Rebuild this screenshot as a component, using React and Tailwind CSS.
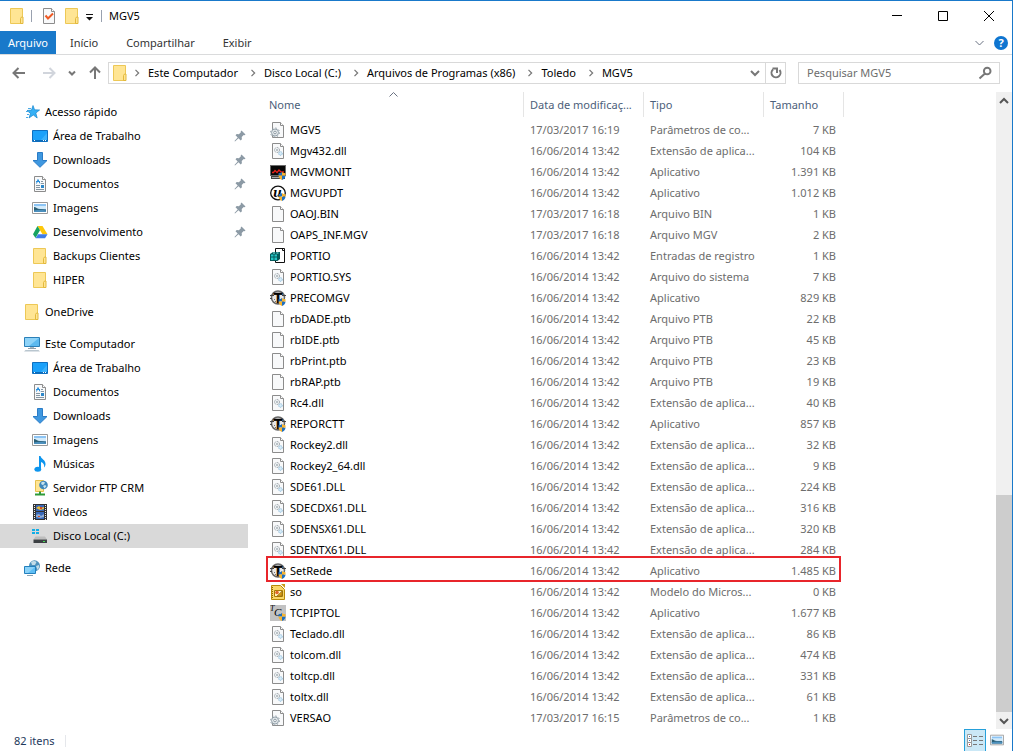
import { useState } from "react";

const DLL_TYPE = "Extensão de aplica...";
const INI_TYPE = "Parâmetros de co...";
const OLD = "16/06/2014 13:42";

const files = [
  { name: "MGV5", date: "17/03/2017 16:19", type: INI_TYPE, size: "7 KB", icon: "ini" },
  { name: "Mgv432.dll", date: OLD, type: DLL_TYPE, size: "104 KB", icon: "dll" },
  { name: "MGVMONIT", date: OLD, type: "Aplicativo", size: "1.391 KB", icon: "monitor" },
  { name: "MGVUPDT", date: OLD, type: "Aplicativo", size: "1.012 KB", icon: "update" },
  { name: "OAOJ.BIN", date: "17/03/2017 16:18", type: "Arquivo BIN", size: "1 KB", icon: "file" },
  { name: "OAPS_INF.MGV", date: "17/03/2017 16:18", type: "Arquivo MGV", size: "2 KB", icon: "file" },
  { name: "PORTIO", date: OLD, type: "Entradas de registro", size: "1 KB", icon: "reg" },
  { name: "PORTIO.SYS", date: OLD, type: "Arquivo do sistema", size: "7 KB", icon: "dll" },
  { name: "PRECOMGV", date: OLD, type: "Aplicativo", size: "829 KB", icon: "toledo" },
  { name: "rbDADE.ptb", date: OLD, type: "Arquivo PTB", size: "22 KB", icon: "file" },
  { name: "rbIDE.ptb", date: OLD, type: "Arquivo PTB", size: "45 KB", icon: "file" },
  { name: "rbPrint.ptb", date: OLD, type: "Arquivo PTB", size: "23 KB", icon: "file" },
  { name: "rbRAP.ptb", date: OLD, type: "Arquivo PTB", size: "19 KB", icon: "file" },
  { name: "Rc4.dll", date: OLD, type: DLL_TYPE, size: "40 KB", icon: "dll" },
  { name: "REPORCTT", date: OLD, type: "Aplicativo", size: "857 KB", icon: "toledo" },
  { name: "Rockey2.dll", date: OLD, type: DLL_TYPE, size: "32 KB", icon: "dll" },
  { name: "Rockey2_64.dll", date: OLD, type: DLL_TYPE, size: "9 KB", icon: "dll" },
  { name: "SDE61.DLL", date: OLD, type: DLL_TYPE, size: "224 KB", icon: "dll" },
  { name: "SDECDX61.DLL", date: OLD, type: DLL_TYPE, size: "316 KB", icon: "dll" },
  { name: "SDENSX61.DLL", date: OLD, type: DLL_TYPE, size: "320 KB", icon: "dll" },
  { name: "SDENTX61.DLL", date: OLD, type: DLL_TYPE, size: "284 KB", icon: "dll" },
  { name: "SetRede", date: OLD, type: "Aplicativo", size: "1.485 KB", icon: "toledo", marked: true },
  { name: "so", date: OLD, type: "Modelo do Micros...", size: "0 KB", icon: "template" },
  { name: "TCPIPTOL", date: OLD, type: "Aplicativo", size: "1.677 KB", icon: "tcp" },
  { name: "Teclado.dll", date: OLD, type: DLL_TYPE, size: "86 KB", icon: "dll" },
  { name: "tolcom.dll", date: OLD, type: DLL_TYPE, size: "474 KB", icon: "dll" },
  { name: "toltcp.dll", date: OLD, type: DLL_TYPE, size: "331 KB", icon: "dll" },
  { name: "toltx.dll", date: OLD, type: DLL_TYPE, size: "61 KB", icon: "dll" },
  { name: "VERSAO", date: "17/03/2017 16:15", type: INI_TYPE, size: "1 KB", icon: "ini" },
];

const groups = [
  {
    name: "Acesso rápido",
    icon: "star",
    items: [
      { name: "Área de Trabalho", icon: "desktop", pinned: true },
      { name: "Downloads", icon: "download", pinned: true },
      { name: "Documentos", icon: "document", pinned: true },
      { name: "Imagens", icon: "image", pinned: true },
      { name: "Desenvolvimento", icon: "drive", pinned: true },
      { name: "Backups Clientes", icon: "folder" },
      { name: "HIPER", icon: "folder" },
    ],
  },
  { name: "OneDrive", icon: "folder", items: [] },
  {
    name: "Este Computador",
    icon: "computer",
    items: [
      { name: "Área de Trabalho", icon: "desktop" },
      { name: "Documentos", icon: "document" },
      { name: "Downloads", icon: "download" },
      { name: "Imagens", icon: "image" },
      { name: "Músicas", icon: "music" },
      { name: "Servidor FTP CRM", icon: "ftp" },
      { name: "Vídeos", icon: "video" },
      { name: "Disco Local (C:)", icon: "disk" },
    ],
  },
  { name: "Rede", icon: "network", items: [] },
];

const crumbs = ["Este Computador", "Disco Local (C:)", "Arquivos de Programas (x86)", "Toledo", "MGV5"];

function Page() {
  return (
    <>
      <path d="M2.5.5h8l3 3v12h-11z" fill="#f8f9fa" stroke="#8c8c8c" />
      <path d="M10.5.5v3h3" fill="#fff" stroke="#8c8c8c" />
    </>
  );
}

function Shield() {
  return (
    <>
      <path d="M12 8v3.500H8.500V9.200C10 9.200 11 8.800 12 8zM12 11.500h3.500c0 2-1.500 3.700-3.500 4.500z" fill="#1f6fc0" />
      <path d="M12 8c1 .8 2 1.200 3.500 1.200v2.300H12zM12 11.500H8.500c0 2 1.500 3.700 3.500 4.500z" fill="#f7b42e" />
    </>
  );
}

function Picture() {
  return (
    <>
      <path d="M.5 2.500h15v11H.5z" fill="#fff" stroke="#999" />
      <path d="M2 4h12v8H2z" fill="#8cc4f4" />
      <path d="M2 6h12v3H2z" fill="#d3ebfb" />
      <path d="M2 7c2 0 3 2 6 2l6 .5V12H2z" fill="#2b5f75" />
      <path d="M2 10.500c4-1 8-1 12 0V12H2z" fill="#4c90bd" />
    </>
  );
}

const drawings = {
  folder: (
    <>
      <path d="M1.500.5h12v15h-12z" fill="#ffe594" stroke="#edc856" />
      <path d="M11.500 15.500v-5l1-1.500h1.500v6.500z" fill="#ffe594" stroke="#e3b93c" />
    </>
  ),
  check: (
    <>
      <Page />
      <path d="M4.500 7.500l2.500 3 5-5" fill="none" stroke="#ee5a24" strokeWidth="2" />
    </>
  ),
  star: (
    <>
      <path d="M9 1.500l1.600 4.300 5 .2-3.800 3 1.400 5L9.300 11 5 14l1.500-4.600L3 6.500l4.500-.4z" fill="#35b0f5" stroke="#1585cf" strokeWidth=".7" />
      <path d="M4 4.500h3M2 7.500h3M3 10.500h2M2 13.500h2" stroke="#4aa9e4" />
    </>
  ),
  desktop: (
    <>
      <path d="M.5 2.500h15v11H.5z" fill="#1ba1fa" stroke="#0e6fc0" />
      <path d="M8 13L15 5v8z" fill="#3cb2fc" />
      <path d="M1 12.500h14" stroke="#0c6bb8" />
      <path d="M2 12.500h1M11 12.500h1M13 12.500h1" stroke="#fff" />
    </>
  ),
  download: <path d="M5.500.5h5v8h4.500L8 15.300 1 8.500h4.500z" fill="#3f98e0" stroke="#2a7cc7" />,
  document: (
    <>
      <Page />
      <path d="M9 5.500h2M9 7.500h3M4 9.500h4M4 11.500h4M4 13.500h8" stroke="#8596a3" />
      <path d="M4.500 7.500l1.500-4 2 4M4 5.500h4" fill="none" stroke="#2a8fdc" />
      <path d="M9 9h3v3H9z" fill="#2e88c9" />
    </>
  ),
  image: <Picture />,
  drive: (
    <>
      <path d="M5.500 2h5l5 8.300h-5z" fill="#fdc70a" />
      <path d="M5.500 2L8 6.300 3.500 14 1 10.300z" fill="#17a260" />
      <path d="M6 10.300h9.500L13 14.200H3.500z" fill="#3f7ce8" />
    </>
  ),
  computer: (
    <>
      <path d="M.5 1.500h15v9H.5z" fill="#5cbaf0" stroke="#2b80b8" />
      <path d="M1 2h14L5 10H1z" fill="#8ed3f8" />
      <path d="M6 11h4v1.500H6z" fill="#a8b8c2" />
      <path d="M4 12.500h8" stroke="#8fa0ab" />
      <path d="M0 15.500h16l-1.500-1.500h-13z" fill="#b9c6cf" />
    </>
  ),
  music: (
    <>
      <path d="M7 0h1.500c.5 3 5.500 4 5 8.500-.2 1.500-1 2.500-1.500 3 .8-3-.8-4.800-3-5.500V13H7z" fill="#0d95ee" />
      <ellipse cx="5.800" cy="13.200" rx="3.400" ry="2.500" fill="#0d95ee" />
    </>
  ),
  ftp: (
    <>
      <path d="M3.500.5h8v11h-8z" fill="#ffe594" stroke="#e6c04e" />
      <circle cx="11.500" cy="5" r="4.300" fill="#3f87bb" />
      <path d="M9 3c1-1.500 3-1.500 4-.500l-1 2-2 .500zM11 6l2-1 1.500 1-2 2.500z" fill="#c8e3ee" />
      <path d="M8 11.500v3M3 14.500h10" stroke="#2e9b38" strokeWidth="2" />
    </>
  ),
  video: (
    <>
      <path d="M1 0h14v16H1z" fill="#333" />
      <path d="M2.500 1v15M13.500 1v15" stroke="#eee" strokeDasharray="1 1" />
      <path d="M4 1h8v6H4zM4 8h8v7H4z" fill="#3868b8" />
      <path d="M4 4l3-2 2 2 3-1v2l-4 1z" fill="#e8ba36" />
      <path d="M4 11l3-1 2 2 3-2v3l-4 1-4-1z" fill="#91afd6" />
      <path d="M8 3h2v2H8zM6 12h2v1H6z" fill="#d44927" />
    </>
  ),
  disk: (
    <>
      <path d="M0 1h3v2H0zM4 1h3v2H4zM0 4h3v2H0zM4 4h3v2H4z" fill="#12aee6" />
      <path d="M3.500 8.500h9.500l2 3H1.500z" fill="#bdbdbd" />
      <path d="M1.500 11.500h13.500v3.500H1.500z" fill="#3c4043" />
      <path d="M11 13.500h2" stroke="#46dc55" />
    </>
  ),
  network: (
    <>
      <circle cx="10.500" cy="5.800" r="5.500" fill="#4d91bb" />
      <path d="M7 2c2-1.500 4-1.500 5.500 0L11 5H8zM12 6l3-1c.5 2-.5 4-1.500 5z" fill="#c4dde8" />
      <path d="M.5 6.500h11v7H.5z" fill="#5fbef4" stroke="#2380bd" />
      <path d="M1 7h10l-7 6H1z" fill="#8bd2f8" />
      <path d="M3 15.500h6" stroke="#8ba4b3" />
    </>
  ),
  file: <Page />,
  ini: (
    <>
      <Page />
      <circle cx="5" cy="10.500" r="3.500" fill="#e3e8eb" stroke="#95a3ac" />
      <circle cx="5" cy="10.500" r="4.500" fill="none" stroke="#8e9ba4" strokeDasharray="1.500 2" />
      <circle cx="5" cy="10.500" r="1.300" fill="#fff" stroke="#8e9ba4" />
    </>
  ),
  dll: (
    <>
      <Page />
      <circle cx="7" cy="7" r="2.500" fill="#eef2f4" stroke="#9aa1a6" strokeDasharray="1.500 .8" />
      <circle cx="7" cy="7" r="1" fill="#a9b2b8" />
      <circle cx="10.500" cy="10.500" r="1.800" fill="#d9edf8" stroke="#8dbbdb" strokeDasharray="1.300 .6" />
    </>
  ),
  monitor: (
    <>
      <path d="M0 1h16v11H0z" fill="#6b6b6b" />
      <path d="M1 2h14v9H1z" fill="#080808" />
      <path d="M2 8.500h1.500l1.500-2 2 2 2-2.500 2 2h3" fill="none" stroke="#e3201b" strokeWidth="1.300" />
      <path d="M1 12h14v3H1z" fill="#444" />
      <path d="M2 13.500h7" stroke="#aaa" />
      <Shield />
    </>
  ),
  update: (
    <>
      <ellipse cx="8" cy="8" rx="7.300" ry="6.800" fill="#fff" stroke="#111" strokeWidth="1.300" />
      <text x="7.500" y="12" textAnchor="middle" fontSize="15" fontWeight="700" fontStyle="italic" fontFamily="Liberation Serif, serif">u</text>
      <Shield />
    </>
  ),
  reg: (
    <>
      <path d="M5.500.5h9v14h-9z" fill="#fff" stroke="#111" />
      <path d="M12.500.5v2h2" fill="none" stroke="#111" />
      <path d="M0 6l3-2h7v7l-2.500 2H0z" fill="#065a5a" />
      <path d="M1 6.500h2.500V8.500H1zM4.500 6.500H7V8.500H4.500zM1 9.500h2.500V12H1zM4.500 9.500H7V12H4.500z" fill="#25c5c5" />
      <path d="M3 4.500h2v1H3zM6.500 4.500h2v1h-2z" fill="#8ef0ef" />
    </>
  ),
  toledo: (
    <>
      <ellipse cx="8" cy="7.500" rx="6.500" ry="6.500" fill="#e8e8e8" stroke="#666" strokeWidth="1.500" />
      <path d="M0 5.500h4M0 8.500h2M12 5.500h4" stroke="#444" />
      <path d="M4 9h1v1H4zM5 11h1v1H5zM4 3h1v1H4z" fill="#777" />
      <text x="8" y="13" textAnchor="middle" fontSize="14" fontWeight="700" stroke="#000" strokeWidth=".5" fontFamily="Liberation Sans, sans-serif">T</text>
      <Shield />
    </>
  ),
  template: (
    <>
      <path d="M1.500 1.500h9l4 4v10h-13z" fill="#f9d767" stroke="#b88a08" />
      <path d="M11 0h4v4z" fill="#c89b18" />
      <path d="M2.500 3v12" stroke="#8b6906" strokeDasharray="1 1" />
      <path d="M4.500 6.500h8v6h-8z" fill="#fff3bd" stroke="#a87a05" />
      <circle cx="7" cy="8.500" r="1.800" fill="#e0662c" />
      <path d="M7 12l5-5v5z" fill="#d69b12" stroke="#80601c" strokeWidth=".5" />
    </>
  ),
  tcp: (
    <>
      <path d="M0 0h16v16H0z" fill="#c2c2c2" />
      <text x="0" y="6" fontSize="8" fontStyle="italic" fontFamily="Liberation Serif, serif">T</text>
      <text x="4" y="11" fontSize="11" fontStyle="italic" fontFamily="Liberation Serif, serif">C</text>
      <Shield />
    </>
  ),
  pin: (
    <path d="M9.500 2.500l4 4-1 .8-.8-.2-2 2 .2 2.200-1.200 1.200L6.500 10.300 3 13.500l-.5-.5L5.700 9.500 3.500 7.300l1.200-1.200 2.200.2 2-2-.2-.8z" fill="#8c9aa5" />
  ),
};

function Icon({ name }) {
  return (
    <svg viewBox="0 0 16 16" className="size-4 shrink-0" aria-hidden="true">
      {drawings[name]}
    </svg>
  );
}

// Thin arrows and chevrons share one stroke-only icon
function Stroke({ d, size = "size-4", width = 1 }) {
  return (
    <svg viewBox="0 0 16 16" className={`${size} shrink-0`} fill="none" stroke="currentColor" strokeWidth={width} aria-hidden="true">
      <path d={d} />
    </svg>
  );
}

function TitleBar() {
  return (
    <header className="flex h-[30px] items-center pl-[9px]">
      <Icon name="folder" />
      <span className="ml-1.5 h-3 w-px bg-gray-400" />
      <button className="ml-[9px]" aria-label="Propriedades">
        <Icon name="check" />
      </button>
      <button className="ml-[7px]" aria-label="Nova pasta">
        <Icon name="folder" />
      </button>
      <button className="ml-px" aria-label="Personalizar barra">
        <svg viewBox="0 0 16 16" className="size-4" aria-hidden="true">
          <path d="M5 6h7v1H5zM5 9h7l-3.500 3.500z" fill="#111" />
        </svg>
      </button>
      <span className="ml-1 h-3 w-px bg-gray-400" />
      <h1 className="ml-[7px] grow">MGV5</h1>
      <div className="flex h-full text-black">
        <button className="flex w-[46px] items-center justify-center" aria-label="Minimizar">
          <Stroke d="M3 7.500h10" />
        </button>
        <button className="flex w-[46px] items-center justify-center" aria-label="Maximizar">
          <Stroke d="M3.500 3.500h9v9h-9z" />
        </button>
        <button className="flex w-[46px] items-center justify-center" aria-label="Fechar">
          <Stroke d="M3 3l10 10M13 3L3 13" />
        </button>
      </div>
    </header>
  );
}

function Ribbon() {
  return (
    <div className="flex h-6 items-stretch border-b border-[#dadbdc] text-[#333]">
      <button className="w-14 bg-[#1979ca] text-white">Arquivo</button>
      <button className="px-3.5">Início</button>
      <button className="px-3.5">Compartilhar</button>
      <button className="px-3.5">Exibir</button>
      <div className="ml-auto flex items-center gap-1.5 pr-1">
        <button className="text-gray-500" aria-label="Expandir faixa">
          <Stroke d="M3.500 6l4 4 4-4" />
        </button>
        <button aria-label="Ajuda">
          <svg viewBox="0 0 14 14" className="size-3.5" aria-hidden="true">
            <circle cx="7" cy="7" r="7" fill="#0f75d0" />
            <text x="7" y="11" textAnchor="middle" fontSize="11" fontWeight="700" fill="#fff">?</text>
          </svg>
        </button>
      </div>
    </div>
  );
}

function AddressBar() {
  const [query, setQuery] = useState("");

  return (
    <div className="flex items-center pt-[7px] pr-3 pb-2 pl-[11px] text-[#777]">
      <button aria-label="Voltar">
        <Stroke d="M14 8H3M7.500 3L2.500 8l5 5" width={2} />
      </button>
      <button className="ml-3.5 text-gray-300" aria-label="Avançar">
        <Stroke d="M2 8h11M8.500 3l5 5-5 5" width={2} />
      </button>
      <button className="ml-[7px]" aria-label="Locais recentes">
        <Stroke d="M5 6.500l3 3 3-3" width={2} />
      </button>
      <button className="ml-[7px]" aria-label="Subir">
        <Stroke d="M8 14V3M3 7.500l5-5 5 5" width={2} />
      </button>
      <nav className="ml-[5px] flex h-[22px] grow items-center border border-[#d9d9d9] pl-[3px] text-black" aria-label="Endereço">
        <Icon name="folder" />
        {crumbs.map((crumb) => (
          <div key={crumb} className="flex items-center">
            <span className="flex w-5 justify-center text-[#777]">
              <Stroke d="M4 3l5 5-5 5" size="size-2.5" width={2} />
            </span>
            <button className="pr-1.5">{crumb}</button>
          </div>
        ))}
        <button className="mr-px ml-auto px-px text-[#777]" aria-label="Locais anteriores">
          <Stroke d="M4 6l4 4 4-4" width={2} />
        </button>
        <button className="flex h-full w-5 items-center justify-center border-l border-[#d9d9d9] text-[#777]" aria-label="Atualizar">
          <Stroke d="M5 4.500a4.500 4.500 0 1 0 6.500.500M4.500 3.500H9V8" width={2} />
        </button>
      </nav>
      <label className="ml-3 flex h-[22px] w-[202px] items-center border border-[#d9d9d9] pr-1.5 pl-2">
        <input
          className="h-5 min-w-0 grow leading-5 outline-none placeholder:text-[#6d6d6d]"
          aria-label="Pesquisar MGV5"
          placeholder="Pesquisar MGV5"
          value={query}
          onChange={(e) => setQuery(e.target.value)}
        />
        <Stroke d="M13.500 6a3.300 3.300 0 1 1-6.600 0 3.300 3.300 0 0 1 6.600 0zM8 8.500L2.500 13.500" width={2} />
      </label>
    </div>
  );
}

function Sidebar({ selected, onSelect }) {
  return (
    <nav className="w-[248px] shrink-0 space-y-2 pt-2" aria-label="Pastas">
      {groups.map((group) => (
        <ul key={group.name}>
          <li>
            <button className="flex h-6 w-full items-center gap-[5px] pl-6">
              <Icon name={group.icon} />
              {group.name}
            </button>
          </li>
          {group.items.map((item) => (
            <li key={item.name}>
              <button
                onClick={() => onSelect(item.name)}
                className={`flex h-6 w-full items-center gap-[5px] pl-8 ${
                  selected === item.name ? "bg-[#d9d9d9]" : ""
                }`}
              >
                <Icon name={item.icon} />
                {item.name}
                {item.pinned && (
                  <span className="ml-auto">
                    <Icon name="pin" />
                  </span>
                )}
              </button>
            </li>
          ))}
        </ul>
      ))}
    </nav>
  );
}

function FileTable() {
  return (
    <table className="w-[578px] table-fixed border-collapse text-left text-[#6d6d6d]">
      <colgroup>
        <col className="w-[258px]" />
        <col className="w-[120px]" />
        <col className="w-[120px]" />
        <col className="w-[80px]" />
      </colgroup>
      <thead className="text-[#4c607a]">
        <tr className="h-[27px] align-top">
          <th className="relative p-0 font-normal">
            <span className="absolute inset-x-0 top-0 flex justify-center pr-1 text-gray-500">
              <svg viewBox="0 0 9 5" className="h-[5px] w-[9px]" fill="none" stroke="currentColor" aria-hidden="true">
                <path d="M.5 4.500l4-4 4 4" />
              </svg>
            </span>
            <button className="block h-[25px] w-full border-r border-[#e5e5e5] pl-[3px] text-left">Nome</button>
          </th>
          <th className="p-0 font-normal">
            <button className="block h-[25px] w-full border-r border-[#e5e5e5] pl-1.5 text-left">Data de modificaç...</button>
          </th>
          <th className="p-0 font-normal">
            <button className="block h-[25px] w-full border-r border-[#e5e5e5] pl-1.5 text-left">Tipo</button>
          </th>
          <th className="p-0 font-normal">
            <button className="block h-[25px] w-full border-r border-[#e5e5e5] pl-1.5 text-left">Tamanho</button>
          </th>
        </tr>
      </thead>
      <tbody>
        {files.map((file) => (
          <tr key={file.name} className="relative h-[21px]">
            <td className="p-0 pl-1 text-black">
              <div className="flex items-center gap-1">
                <Icon name={file.icon} />
                {file.name}
              </div>
              {file.marked && (
                <span className="absolute -top-1 right-[3px] -bottom-px left-0 border-2 border-[#e8252b]" />
              )}
            </td>
            <td className="p-0 pl-1.5">{file.date}</td>
            <td className="p-0 pl-1.5 whitespace-nowrap">{file.type}</td>
            <td className="p-0 pr-2 text-right">{file.size}</td>
          </tr>
        ))}
      </tbody>
    </table>
  );
}

function ScrollBar() {
  return (
    <div className="ml-auto flex w-4 flex-col bg-[#f0f0f0] text-[#555]">
      <button className="flex h-[17px] items-center justify-center" aria-label="Rolar para cima">
        <Stroke d="M4 10l4-4 4 4" width={2} />
      </button>
      <div className="flex grow flex-col justify-end">
        <div className="h-[36%] bg-[#cdcdcd]" />
      </div>
      <button className="flex h-[17px] items-center justify-center" aria-label="Rolar para baixo">
        <Stroke d="M4 6l4 4 4-4" width={2} />
      </button>
    </div>
  );
}

function StatusBar() {
  return (
    <footer className="flex h-[22px] items-stretch text-[#1e395b]">
      <div className="flex items-center pt-0.5 pl-3.5">
        82 itens
        <span className="ml-2.5 h-3 w-px bg-gray-200" />
      </div>
      <div className="ml-auto flex gap-1 pr-2">
        <button className="flex w-[22px] items-center justify-center border border-b-0 border-[#26a0da] bg-[#cbe8f6]" aria-label="Detalhes">
          <svg viewBox="0 0 16 14" className="h-3.5 w-4" fill="none" aria-hidden="true">
            <path d="M.5.5h4v4h-4zM.5 4.500h4v4h-4zM.5 8.500h4v4h-4z" fill="#fff" stroke="#999" />
            <path d="M6 2.500h4M12 2.500h4M6 6.500h4M12 6.500h4M6 10.500h4M12 10.500h4" stroke="#777" />
            <path d="M2 2.500h1M2 6.500h1" stroke="#3b77bc" />
            <path d="M2 10.500h1" stroke="#d22" />
          </svg>
        </button>
        <button aria-label="Miniaturas">
          <svg viewBox="0 0 16 16" className="size-3.5" aria-hidden="true">
            <Picture />
          </svg>
        </button>
      </div>
    </footer>
  );
}

export default function App() {
  const [selected, setSelected] = useState("Disco Local (C:)");

  return (
    <div className="flex min-h-screen flex-col border-t border-r border-[#1979ca] bg-white font-['Noto_Sans',sans-serif] text-[11px] leading-4 text-black">
      <TitleBar />
      <Ribbon />
      <AddressBar />
      <div className="flex grow">
        <Sidebar selected={selected} onSelect={setSelected} />
        <main className="pl-[18px]">
          <FileTable />
        </main>
        <ScrollBar />
      </div>
      <StatusBar />
    </div>
  );
}
